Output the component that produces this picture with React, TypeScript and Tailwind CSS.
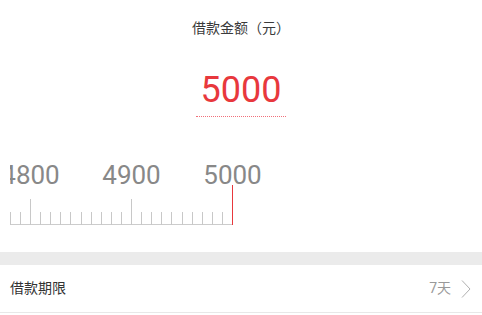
import * as React from "react";

const ticks = Array.from({ length: 23 }, (_, i) => 4780 + i * 10);
const toX = (v: number) => Math.round(232 - (5000 - v) * 1.01) + 0.5;

const Ruler: React.FC = () => (
  <svg width="482" height="70" viewBox="0 160 482 70" className="block">
    <defs>
      <clipPath id="rulerClip">
        <rect x="10" y="150" width="472" height="80" />
      </clipPath>
    </defs>
    <g clipPath="url(#rulerClip)">
      {[4800, 4900, 5000].map((v) => (
        <text
          key={v}
          x={toX(v)}
          y={184}
          textAnchor="middle"
          fontSize="26"
          fill="#888888"
          fontFamily="Roboto, sans-serif"
        >
          {v}
        </text>
      ))}
    </g>
    <line x1="10" y1="224.5" x2="232.5" y2="224.5" stroke="#cccccc" strokeWidth="1" />
    {ticks.map((v) => {
      const major = v % 100 === 0;
      const active = v === 5000;
      const top = active ? 185 : major ? 199 : 212;
      return (
        <line
          key={v}
          x1={toX(v)}
          x2={toX(v)}
          y1={top}
          y2={225}
          stroke={active ? "#e8383d" : "#c8c8c8"}
          strokeWidth="1"
        />
      );
    })}
  </svg>
);

export default function App() {
  return (
    <div
      className="w-[482px] h-[315px] bg-white overflow-hidden flex flex-col"
      style={{ fontFamily: 'Roboto, "Noto Sans CJK SC", sans-serif' }}
    >
      {/* amount header */}
      <div className="mt-[20px] h-[16px] leading-[16px] text-center text-[14px] text-[#3a3a3a]">
        借款金额（元）
      </div>
      <div className="mt-[33px] flex justify-center">
        <div className="px-[5px] pb-[5px] border-b border-dotted border-[#f0707a] text-[36px] leading-[42px] text-[#e8383d]">
          5000
        </div>
      </div>

      {/* ruler */}
      <div className="mt-[43px]">
        <Ruler />
      </div>

      <div className="mt-[22px] h-[13px] bg-[#ebebeb]" />

      <div className="h-[48px] border-b border-[#e8e8e8] pl-[10px] pr-[11px] flex items-center justify-between">
        <span className="text-[14px] text-[#333]">借款期限</span>
        <div className="flex items-center">
          <span className="text-[14px] text-[#999]">7天</span>
          <svg width="10" height="20" viewBox="0 0 10 20" className="ml-[10px]">
            <path d="M1 1.5 L9 10 L1 18.5" fill="none" stroke="#b0b0b0" strokeWidth="1" />
          </svg>
        </div>
      </div>
    </div>
  );
}
